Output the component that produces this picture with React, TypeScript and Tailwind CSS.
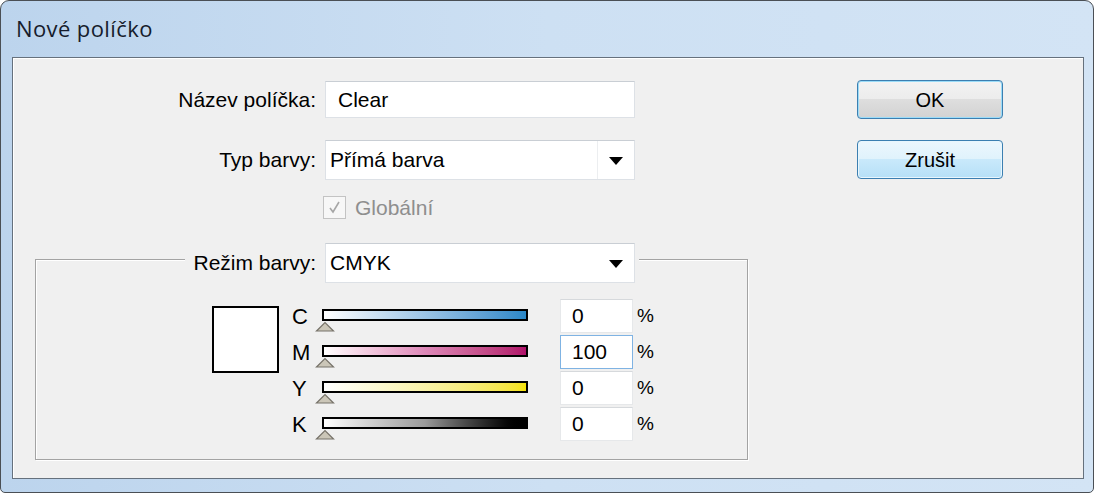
import React from "react";

const rows = [
  { key: "C", value: "0", bar: "bg-linear-to-r from-white to-[#2a88c8]", focus: false },
  { key: "M", value: "100", bar: "bg-linear-to-r from-white via-[#dd88b8] to-[#b0106a]", focus: true },
  { key: "Y", value: "0", bar: "bg-linear-to-r from-white to-[#f4e200]", focus: false },
  { key: "K", value: "0", bar: "bg-linear-to-r from-white via-[#9a9a9a] to-black", focus: false },
];

function Arrow() {
  return (
    <svg width="14" height="8" viewBox="0 0 14 8" className="shrink-0">
      <polygon points="0,0 14,0 7,8" fill="#000" />
    </svg>
  );
}

function Combo({ value, divider }: { value: string; divider?: boolean }) {
  return (
    <div className="flex h-[40px] w-[310px] items-center border border-[#dde1e6] border-t-[#c9ced4] bg-white">
      <div
        className={`flex h-full flex-1 items-center pl-[4px] ${
          divider ? "border-r border-[#eceef0]" : ""
        }`}
      >
        {value}
      </div>
      <div className="flex w-[36px] items-center justify-center pt-[2px]">
        <Arrow />
      </div>
    </div>
  );
}

function Thumb() {
  return (
    <svg width="20" height="11" viewBox="0 0 20 11" className="-ml-[7px] block">
      <polygon points="1.5,10 10,1.5 18.5,10" fill="#cbc6b8" stroke="#77736a" strokeWidth="1.2" />
    </svg>
  );
}

function ChannelRow({ k, value, bar, focus }: { k: string; value: string; bar: string; focus: boolean }) {
  return (
    <div className="flex h-[34px] items-center">
      <div className="w-[32px] pl-[2px] pt-[2px] text-[22px]">{k}</div>
      <div className="h-[34px] w-[206px] pt-[10px]">
        <div className={`h-[12px] border-2 border-black ${bar}`} />
        <Thumb />
      </div>
      <div
        className={`ml-[32px] flex h-[34px] w-[73px] items-center bg-white pl-[11px] ${
          focus ? "border border-[#7fb3e3]" : "border border-[#e6e8ea] border-t-[#d6d9dc]"
        }`}
      >
        {value}
      </div>
      <div className="ml-[4px] pt-[2px] text-[19px]">%</div>
    </div>
  );
}

export default function App() {
  return (
    <div className="h-[494px] w-[1098px] bg-white font-['Liberation_Sans',Arial,sans-serif] text-[21px] text-black">
      <div className="flex h-[493px] w-[1094px] flex-col rounded-t-[9px] rounded-b-[5px] border border-[#4a4f55] bg-linear-to-r from-[#bcd4ed] via-[#cde0f3] to-[#d3e4f5]">
        {/* title bar */}
        <div className="flex h-[56px] items-start pl-[15px] pt-[11px] font-['Open_Sans',sans-serif] text-[22px] tracking-[0.4px] text-[#161c2c]">
          Nové políčko
        </div>

        {/* client area */}
        <div className="ml-[11px] mr-[9px] flex h-[422px] border border-[#66717d] bg-[#f0f0f0] shadow-[inset_1px_1px_0_#ffffff]">
          {/* left column */}
          <div className="flex w-[735px] flex-none flex-col pl-[22px] pt-[23px]">
            <div className="flex items-center">
              <div className="w-[281px] text-right">Název políčka:</div>
              <div className="ml-[9px] flex h-[37px] w-[310px] items-center border border-[#dde1e6] border-t-[#c9ced4] bg-white pl-[12px]">
                Clear
              </div>
            </div>

            <div className="mt-[22px] flex items-center">
              <div className="w-[281px] text-right">Typ barvy:</div>
              <div className="ml-[9px]">
                <Combo value="Přímá barva" divider />
              </div>
            </div>

            <div className="mt-[12px] flex items-center pl-[288px]">
              <div className="flex h-[23px] w-[23px] items-center justify-center border border-[#c3c3c3] bg-[#f7f7f7]">
                <svg width="15" height="15" viewBox="0 0 15 15">
                  <path d="M3 8 L6 12 L12 2" fill="none" stroke="#a6a6a6" strokeWidth="1.6" />
                </svg>
              </div>
              <div className="ml-[9px] text-[#8e8e8e]">Globální</div>
            </div>

            {/* group box */}
            <div className="mt-[35px] w-[713px] border border-[#a3a3a3] pb-[18px] shadow-[inset_1px_1px_0_#ffffff,1px_1px_0_#ffffff]">
              <div className="-mt-[17px] ml-[149px] flex w-fit items-center bg-[#f0f0f0] pl-[8px] pr-[4px]">
                <div className="w-[123px] text-right">Režim barvy:</div>
                <div className="ml-[9px]">
                  <Combo value="CMYK" />
                </div>
              </div>

              <div className="flex pl-[176px] pt-[16px]">
                <div className="mt-[7px] h-[67px] w-[67px] border-2 border-black bg-white" />
                <div className="ml-[11px] flex flex-col gap-[2px]">
                  {rows.map((r) => (
                    <ChannelRow key={r.key} k={r.key} value={r.value} bar={r.bar} focus={r.focus} />
                  ))}
                </div>
              </div>
            </div>
          </div>

          {/* buttons */}
          <div className="ml-[109px] flex flex-col gap-[21px] pt-[22px]">
            <button className="h-[39px] w-[146px] rounded-[4px] border border-[#3c7fb1] bg-[linear-gradient(to_bottom,#f3f3f3_0%,#ececec_50%,#dedede_50%,#d2d2d2_100%)] text-[20px] shadow-[inset_0_0_0_1px_#9bdcf8]">
              OK
            </button>
            <button className="h-[39px] w-[146px] rounded-[4px] border border-[#3c7fb1] bg-[linear-gradient(to_bottom,#ecf7fd_0%,#dff2fc_50%,#c9e9fb_50%,#b6e0f7_100%)] text-[20px] shadow-[inset_0_0_0_1px_#e8f6fd]">
              Zrušit
            </button>
          </div>
        </div>
      </div>
    </div>
  );
}
